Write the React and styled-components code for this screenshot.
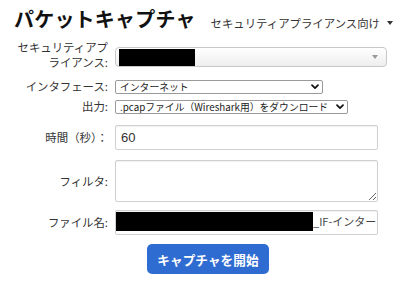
import React from "react";
import styled, { createGlobalStyle } from "styled-components";

const Global = createGlobalStyle`
  html, body { margin: 0; padding: 0; background: #fff; }
  body { font-family: "Noto Sans CJK JP", "Noto Sans", sans-serif; color: #333; }
  * { box-sizing: border-box; }
`;

const Page = styled.div`
  width: 400px;
  height: 287px;
  padding: 7px 4px 0 14px;
  overflow: hidden;
`;

const Header = styled.div`
  display: flex;
  justify-content: space-between;
  align-items: flex-end;
`;

const Title = styled.h1`
  margin: 0;
  font-size: 20px;
  line-height: 24px;
  font-weight: 700;
  color: #111;
  letter-spacing: 0.2px;
`;

const Switcher = styled.div`
  display: flex;
  align-items: center;
  gap: 3px;
  margin-right: 3px;
  font-size: 11.4px;
  line-height: 16px;
  color: #333;
`;

const Form = styled.div`
  width: 376px;
`;

const Row = styled.div`
  display: grid;
  grid-template-columns: 94px 1fr;
  column-gap: 7px;
  align-items: ${(p) => p.$align || "center"};
  margin-top: ${(p) => p.$mt}px;
`;

const Label = styled.label`
  text-align: right;
  font-size: 11.4px;
  line-height: 15px;
  color: #333;
  white-space: nowrap;
`;

const FancySelect = styled.div`
  width: 272px;
  height: 20px;
  margin-top: ${(p) => p.$mt || 0}px;
  border: 1px solid #c8c8c8;
  border-radius: 4px;
  background: linear-gradient(#ffffff, #eeeeee);
  display: flex;
  align-items: center;
  justify-content: space-between;
  padding: 0 8px 0 3px;
`;

const Redact = styled.span`
  display: block;
  background: #000;
  width: ${(p) => p.$w}px;
  height: ${(p) => p.$h}px;
  flex: none;
`;

const SmallArrow = styled.span`
  width: 0;
  height: 0;
  border-left: 3px solid transparent;
  border-right: 3px solid transparent;
  border-top: 4px solid #999;
`;

const SelectWrap = styled.div`
  position: relative;
  width: ${(p) => p.$w}px;
  height: 14px;
`;

const NativeSelect = styled.select`
  display: block;
  appearance: none;
  -webkit-appearance: none;
  width: 100%;
  height: 14px;
  margin: 0;
  padding: 0 12px 0 4px;
  border: 1px solid #9a9a9a;
  border-radius: 2px;
  background: #fff;
  font-family: "Noto Sans CJK JP", "Noto Sans", sans-serif;
  font-size: 9.8px;
  line-height: 12px;
  color: #222;
  outline: none;
`;

const Chevron = styled.svg`
  position: absolute;
  right: 4px;
  top: 4px;
  pointer-events: none;
`;

const TextInput = styled.input`
  display: block;
  width: 263px;
  height: 25px;
  margin: 0;
  padding: 0 5px;
  border: 1px solid #d0d0d0;
  border-radius: 2px;
  box-shadow: inset 0 1px 1px rgba(0, 0, 0, 0.06);
  font-family: "Liberation Sans", "Noto Sans CJK JP", sans-serif;
  font-size: 13px;
  color: #333;
  outline: none;
`;

const TextArea = styled.textarea`
  display: block;
  width: 263px;
  height: 42px;
  margin: 0;
  padding: 4px 5px;
  border: 1px solid #d0d0d0;
  border-radius: 2px;
  box-shadow: inset 0 1px 1px rgba(0, 0, 0, 0.06);
  font-family: "Liberation Sans", sans-serif;
  font-size: 13px;
  outline: none;
`;

const FakeInput = styled.div`
  width: 263px;
  height: 25px;
  border: 1px solid #d0d0d0;
  border-radius: 2px;
  box-shadow: inset 0 1px 1px rgba(0, 0, 0, 0.06);
  display: flex;
  align-items: flex-start;
  padding-top: 1px;
  overflow: hidden;
  white-space: nowrap;
  font-size: 11px;
  line-height: 19px;
  color: #444;
`;

const Button = styled.button`
  margin: 0 0 0 32px;
  width: 122px;
  height: 30px;
  border: none;
  border-radius: 5px;
  background: #2f6cd2;
  color: #fff;
  font-family: "Noto Sans CJK JP", sans-serif;
  font-weight: 700;
  font-size: 12.6px;
  letter-spacing: 0.1px;
  cursor: pointer;
`;

const Caret = styled.span`
  width: 0;
  height: 0;
  margin-left: 4px;
  border-left: 3px solid transparent;
  border-right: 3px solid transparent;
  border-top: 4px solid #333;
`;

const ChevronIcon = () => (
  <Chevron width="8" height="6" viewBox="0 0 8 6">
    <path d="M1 1.2 L4 4.2 L7 1.2" fill="none" stroke="#111" strokeWidth="1.7" strokeLinecap="round" strokeLinejoin="round" />
  </Chevron>
);

export default function App() {
  return (
    <>
      <Global />
      <Page>
        <Header>
          <Title>パケットキャプチャ</Title>
          <Switcher>
            セキュリティアプライアンス向け
            <Caret />
          </Switcher>
        </Header>
        <Form>
          <Row $mt={9} $align="start">
            <Label>
              セキュリティアプ
              <br />
              ライアンス:
            </Label>
            <FancySelect $mt={7}>
              <Redact $w={76} $h={17} />
              <SmallArrow />
            </FancySelect>
          </Row>
          <Row $mt={9}>
            <Label>インタフェース:</Label>
            <SelectWrap $w={208}>
              <NativeSelect defaultValue="inet">
                <option value="inet">インターネット</option>
              </NativeSelect>
              <ChevronIcon />
            </SelectWrap>
          </Row>
          <Row $mt={5}>
            <Label>出力:</Label>
            <SelectWrap $w={233}>
              <NativeSelect defaultValue="pcap">
                <option value="pcap">.pcapファイル（Wireshark用）をダウンロード</option>
              </NativeSelect>
              <ChevronIcon />
            </SelectWrap>
          </Row>
          <Row $mt={11}>
            <Label>時間（秒）：</Label>
            <TextInput defaultValue="60" />
          </Row>
          <Row $mt={10}>
            <Label>フィルタ:</Label>
            <TextArea />
          </Row>
          <Row $mt={8}>
            <Label>ファイル名:</Label>
            <FakeInput>
              <Redact $w={197} $h={19} />
              <span>_IF-インター</span>
            </FakeInput>
          </Row>
          <Row $mt={9}>
            <span />
            <Button>キャプチャを開始</Button>
          </Row>
        </Form>
      </Page>
    </>
  );
}
